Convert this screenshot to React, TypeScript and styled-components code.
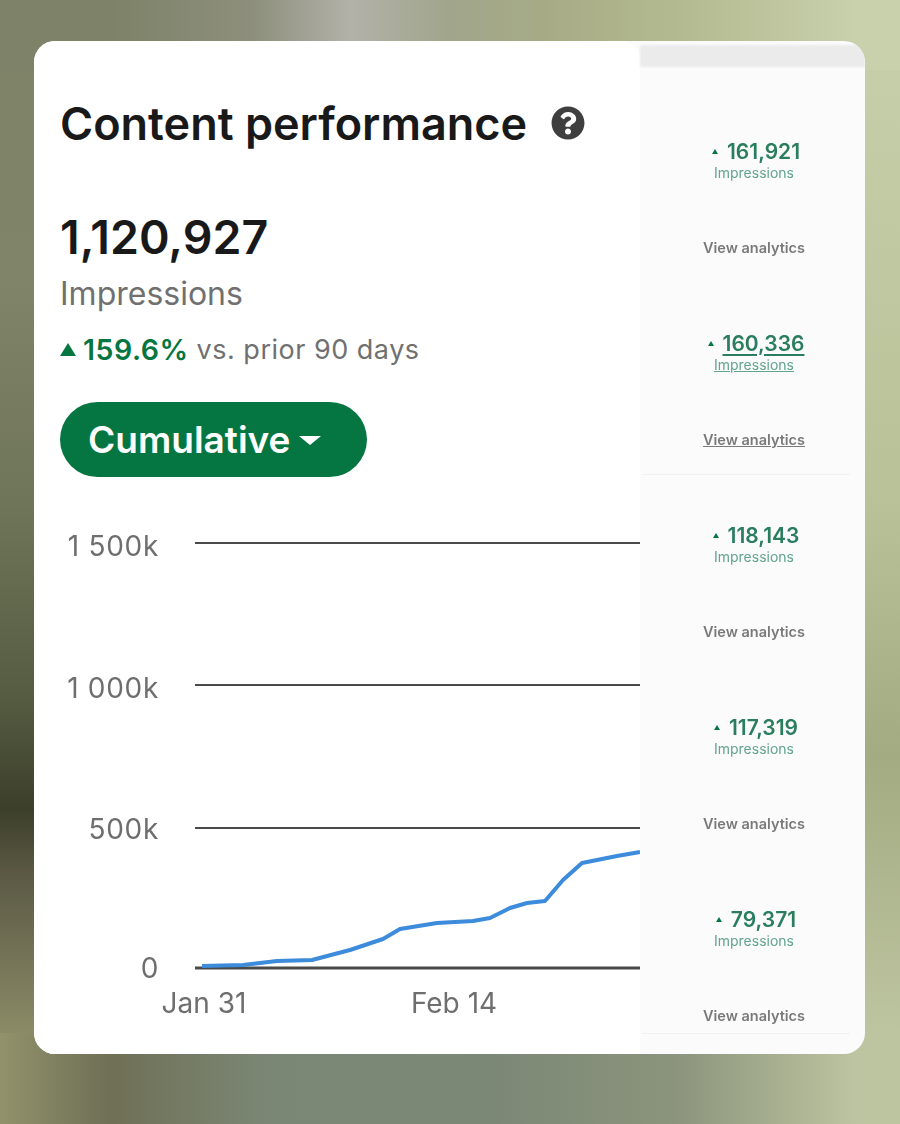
import * as React from 'react'
import styled, { createGlobalStyle } from 'styled-components'
import { FaQuestionCircle } from 'react-icons/fa'

const GlobalStyle = createGlobalStyle`
  html, body {
    margin: 0;
    padding: 0;
  }
  body {
    font-family: Inter, "Liberation Sans", sans-serif;
  }
`

const Page = styled.div`
  width: 900px;
  height: 1124px;
  box-sizing: border-box;
  padding: 41px 35px 70px 34px;
  background:
    linear-gradient(90deg, #7e8268 0%, #7e8268 12%, #8d8f7c 28%, #b2b2a9 39%, #a1a58b 50%, #a6ab86 60%, #b3b98f 75%, #c8d0ac 95%) top / 100% 70px no-repeat,
    linear-gradient(90deg, #92926c 0%, #6f7055 12%, #7b8775 30%, #7c8876 55%, #8b947c 75%, #bdc4a0 95%) bottom / 100% 91px no-repeat,
    linear-gradient(180deg, #7e8268 0%, #808468 25%, #6f7558 45%, #565c42 62%, #3c3f2a 72%, #5c5a45 78%, #8b8b67 92%, #8e8e68 100%) left / 40px 100% no-repeat,
    linear-gradient(180deg, #c8d0ac 0%, #b9c198 45%, #a3ab82 67%, #bdc4a0 92%, #bdc4a0 100%) right / 40px 100% no-repeat,
    #a0a584;
`

const Card = styled.div`
  display: flex;
  height: 1013px;
  border-radius: 21px;
  overflow: hidden;
  background: #fbfbfb;
`

const MainPanel = styled.div`
  width: 606px;
  flex: none;
  box-sizing: border-box;
  padding: 49px 0 0 26px;
  background: #fff;
  border-top-right-radius: 18px;
  filter: blur(0.35px);
`

const TitleRow = styled.div`
  display: flex;
  align-items: center;
  gap: 24px;
  height: 66px;
  color: #3f3f3f;
`

const Title = styled.h1`
  margin: 0;
  font-size: 45px;
  font-weight: 600;
  color: #191919;
`

const Total = styled.div`
  margin-top: 53px;
  height: 56px;
  line-height: 56px;
  font-size: 46.5px;
  font-weight: 600;
  color: #191919;
`

const Metric = styled.div`
  margin-top: 9px;
  font-size: 32px;
  line-height: 40px;
  color: #707070;
`

const Delta = styled.div`
  display: flex;
  align-items: center;
  margin-top: 15px;
  height: 40px;
  font-size: 27px;
  letter-spacing: 0.5px;
  color: #707070;
`

const DeltaValue = styled.strong`
  margin: 0 8px 0 7px;
  font-size: 28.5px;
  font-weight: 600;
  color: #057642;
`

const UpArrow = styled.span<{ $size: number }>`
  width: 0;
  height: 0;
  border-left: ${p => p.$size * 0.65}px solid transparent;
  border-right: ${p => p.$size * 0.65}px solid transparent;
  border-bottom: ${p => p.$size}px solid #057642;
`

const PillButton = styled.button`
  display: flex;
  align-items: center;
  gap: 9px;
  margin-top: 33px;
  width: 307px;
  height: 75px;
  padding: 0 0 0 28px;
  border: 0;
  border-radius: 38px;
  background: #057642;
  color: #fff;
  font-family: inherit;
  font-size: 37px;
  font-weight: 600;
`

const Caret = styled.span`
  width: 0;
  height: 0;
  margin-top: 2px;
  border-left: 11px solid transparent;
  border-right: 11px solid transparent;
  border-top: 9px solid #fff;
`

const ChartSvg = styled.svg`
  display: block;
  margin: 43px 0 0 -26px;
`

const AxisText = styled.text<{ $wide?: boolean }>`
  font-family: Inter, "Liberation Sans", sans-serif;
  font-size: 28px;
  letter-spacing: ${p => (p.$wide ? '0.7px' : '0')};
  fill: #6e6e6e;
`

const SidePanel = styled.div`
  flex: 1;
  padding-top: 4px;
`

const Band = styled.div`
  height: 22px;
  margin-bottom: 24px;
  background: #ebebeb;
  filter: blur(1px);
`

const Row = styled.div<{ $height: number; $divider?: boolean }>`
  display: flex;
  flex-direction: column;
  align-items: center;
  box-sizing: border-box;
  width: 208px;
  height: ${p => p.$height}px;
  margin-left: 2px;
  padding: 50px 0 0 16px;
  border-bottom: 1px solid ${p => (p.$divider ? '#f1f1f1' : 'transparent')};
  filter: blur(0.5px);
`

const StatLine = styled.div`
  display: flex;
  align-items: center;
  gap: 9px;
  height: 20px;
  margin-left: 4px;
  font-size: 21px;
  font-weight: 600;
  color: #2a7d5f;
`

const StatValue = styled.span<{ $underline?: boolean }>`
  text-decoration: ${p => (p.$underline ? 'underline' : 'none')};
  text-underline-offset: 3px;
`

const StatLabel = styled.div<{ $underline?: boolean }>`
  margin-top: 3px;
  height: 18px;
  line-height: 18px;
  font-size: 14px;
  color: #62a48d;
  text-decoration: ${p => (p.$underline ? 'underline' : 'none')};
`

const ViewLink = styled.div<{ $underline?: boolean }>`
  margin-top: 56px;
  height: 20px;
  line-height: 20px;
  font-size: 14.5px;
  font-weight: 600;
  color: #7a7a7a;
  text-decoration: ${p => (p.$underline ? 'underline' : 'none')};
`

const GRID_LINES = [
  { y: 23, label: '1 500k', weight: 2, labelDy: 13 },
  { y: 165, label: '1 000k', weight: 2, labelDy: 13 },
  { y: 308, label: '500k', weight: 2, labelDy: 11 },
  { y: 448, label: '0', weight: 3, labelDy: 10 },
]

// chart origin in page space is x 34, y 520
const TREND = [
  [168, 446], [209, 445], [243, 441], [278, 440], [316, 430], [349, 419],
  [366, 409], [403, 403], [439, 401], [456, 398], [476, 388], [493, 383],
  [511, 381], [529, 360], [548, 343], [583, 336], [606, 332],
]

const POSTS = [
  { value: '161,921', height: 192 },
  { value: '160,336', height: 192, active: true, divider: true },
  { value: '118,143', height: 192 },
  { value: '117,319', height: 192 },
  { value: '79,371', height: 175, divider: true },
]

export default function App() {
  return (
    <Page>
      <GlobalStyle />
      <Card>
        <MainPanel>
          <TitleRow>
            <Title>Content performance</Title>
            <FaQuestionCircle size={34} />
          </TitleRow>
          <Total>1,120,927</Total>
          <Metric>Impressions</Metric>
          <Delta>
            <UpArrow $size={13} />
            <DeltaValue>159.6%</DeltaValue>
            vs. prior 90 days
          </Delta>
          <PillButton>
            Cumulative
            <Caret />
          </PillButton>
          <ChartSvg width={606} height={510} viewBox="0 0 606 510">
            {GRID_LINES.map(line => (
              <g key={line.label}>
                <line x1={161} x2={606} y1={line.y} y2={line.y} stroke="#4a4a48" strokeWidth={line.weight} />
                <AxisText $wide x={125} y={line.y + line.labelDy} textAnchor="end">
                  {line.label}
                </AxisText>
              </g>
            ))}
            <polyline
              points={TREND.map(p => p.join(',')).join(' ')}
              fill="none"
              stroke="#3d8bdb"
              strokeWidth={4}
              strokeLinejoin="round"
            />
            <AxisText x={170} y={493} textAnchor="middle">
              Jan 31
            </AxisText>
            <AxisText x={420} y={493} textAnchor="middle">
              Feb 14
            </AxisText>
          </ChartSvg>
        </MainPanel>
        <SidePanel>
          <Band />
          {POSTS.map(post => (
            <Row key={post.value} $height={post.height} $divider={post.divider}>
              <StatLine>
                <UpArrow $size={5} />
                <StatValue $underline={post.active}>{post.value}</StatValue>
              </StatLine>
              <StatLabel $underline={post.active}>Impressions</StatLabel>
              <ViewLink $underline={post.active}>View analytics</ViewLink>
            </Row>
          ))}
        </SidePanel>
      </Card>
    </Page>
  )
}
